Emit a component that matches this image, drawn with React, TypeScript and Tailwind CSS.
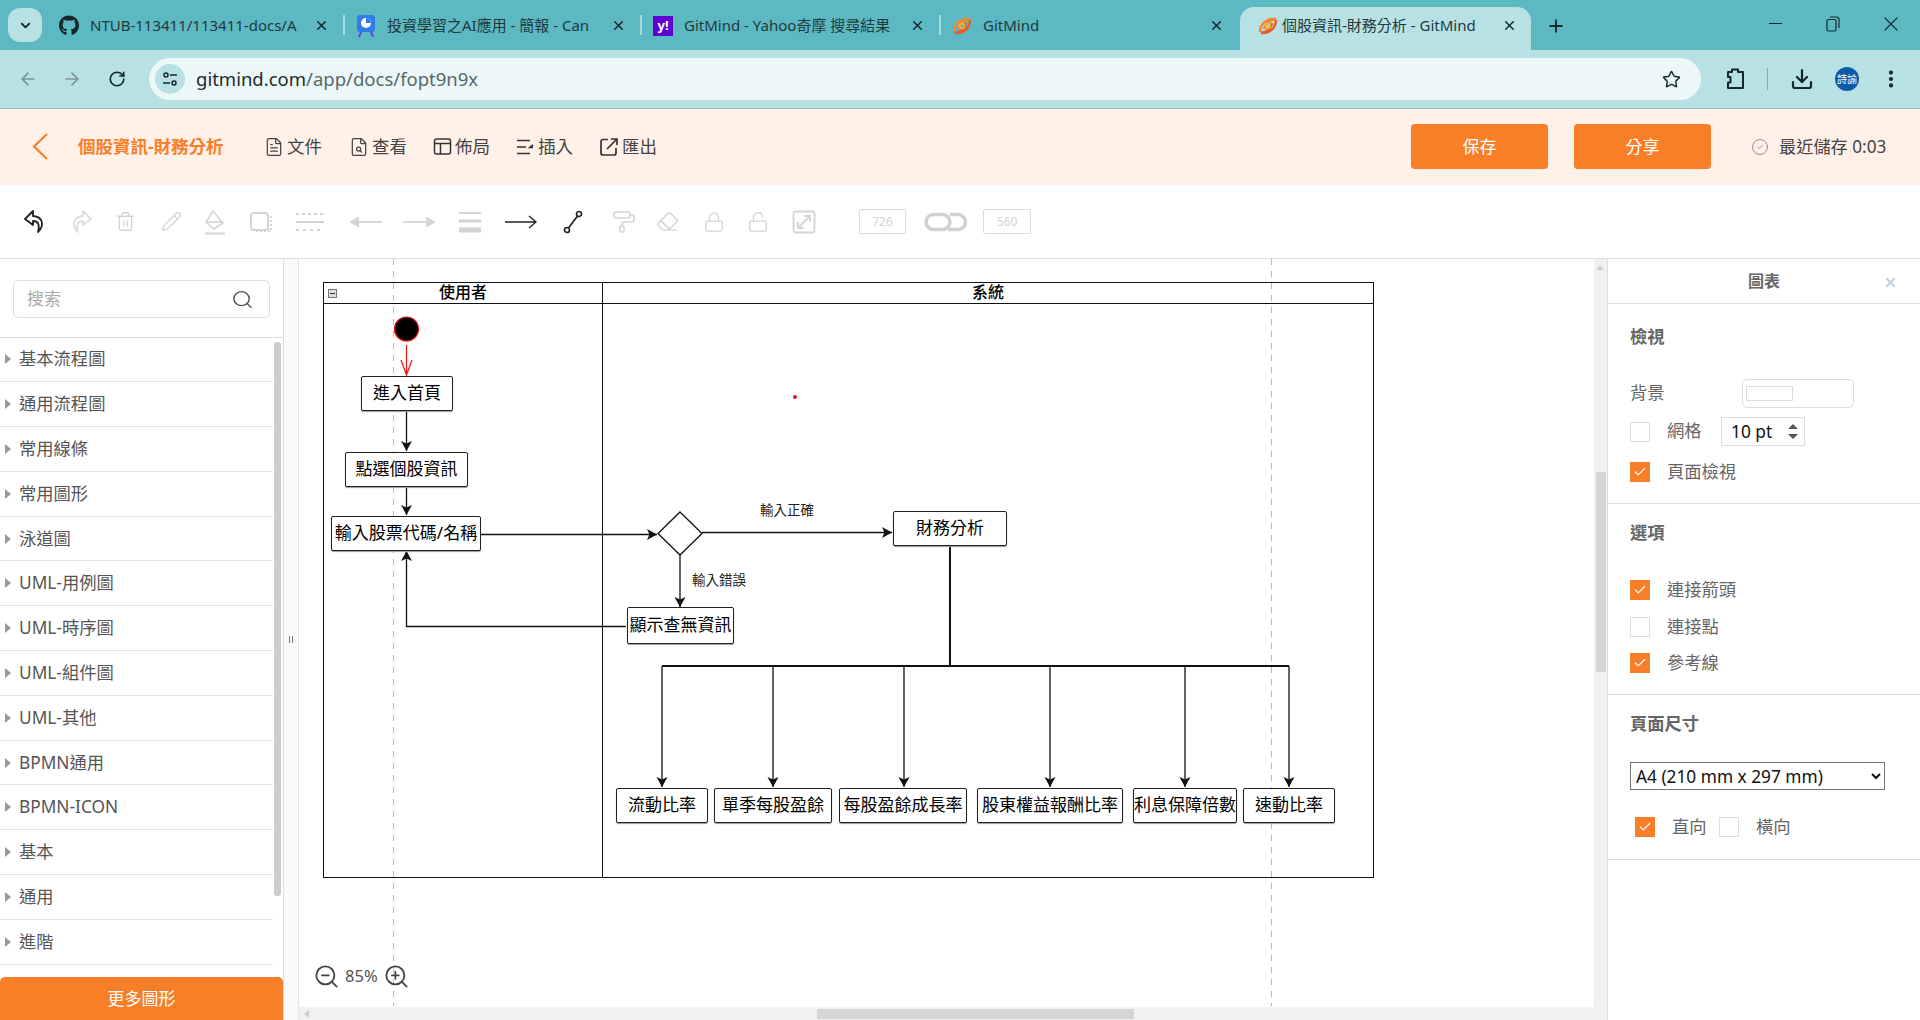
import React from 'react';
import {
  ArrowLeft, ArrowRight, RotateCw, Star, Download, MoreVertical, X, Plus, ChevronDown,
  FileText, FileSearch, Search, Check, CircleCheck, Trash2, Pencil,
  PaintRoller, Eraser, Lock, LockOpen, ZoomIn, ZoomOut,
} from 'lucide-react';
import { FaGithub } from 'react-icons/fa';

const FONT = "font-['Noto_Sans','Noto_Sans_CJK_TC',sans-serif]";

function GitMindLogo() {
  return (
    <svg width="20" height="20" viewBox="0 0 20 20" fill="none">
      <path d="M2 16 C2 8 9 2 18 3 C12 4 7 8 6 13" stroke="#f5872b" strokeWidth="2.4" />
      <path d="M18 4 C18 12 11 18 3 17 C9 16 13 12 14 7" stroke="#ea5a2a" strokeWidth="2.4" />
      <circle cx="10" cy="10" r="2.4" stroke="#f7b32b" strokeWidth="1.6" />
    </svg>
  );
}

function Tab({ icon, title, w, sep = true }: { icon: React.ReactNode; title: string; w: string; sep?: boolean }) {
  return (
    <div className={`${w} h-[43px] pb-[6px] flex items-center shrink-0 relative`}>
      <span className="w-5 h-5 flex items-center justify-center shrink-0 ml-[11px]">{icon}</span>
      <span className="ml-[11px] whitespace-nowrap text-[15px] text-[#1d3a3e]">{title}</span>
      <X size={15} strokeWidth={2.4} className="absolute right-[16px] top-[11px] text-[#14282b]" />
      {sep && <span className="absolute right-0 top-[8px] w-[2px] h-[20px] bg-[#a9d9dd]" />}
    </div>
  );
}

function Menu({ icon, label, w }: { icon: React.ReactNode; label: string; w: string }) {
  return (
    <div className={`${w} flex items-center gap-[3px] text-[17.5px] text-[#444]`}>
      <span className="w-5 flex justify-center">{icon}</span>
      <span>{label}</span>
    </div>
  );
}

function Undo({ flip = false, color }: { flip?: boolean; color: string }) {
  return (
    <svg width="24" height="26" viewBox="0 0 24 26" fill="none" stroke={color} strokeWidth="1.8" strokeLinejoin="round" className={flip ? '-scale-x-100' : ''}>
      <path d="M10 2 L2 10 L10 16 V12 C15 12 17 15 15 23 C21 17 21 8 10 7 Z" />
    </svg>
  );
}

function Checkbox({ on = false }: { on?: boolean }) {
  return on ? (
    <span className="w-5 h-5 bg-[#f87e28] flex items-center justify-center shrink-0">
      <Check size={14} strokeWidth={2.2} className="text-white" />
    </span>
  ) : (
    <span className="w-5 h-5 bg-white border border-[#ddd] shrink-0" />
  );
}

const CATEGORIES = ['基本流程圖', '通用流程圖', '常用線條', '常用圖形', '泳道圖', 'UML-用例圖', 'UML-時序圖', 'UML-組件圖', 'UML-其他', 'BPMN通用', 'BPMN-ICON', '基本', '通用', '進階'];

function Node({ className, label }: { className: string; label: string }) {
  return (
    <div className={`absolute h-[35px] pb-[2px] flex items-center justify-center bg-white border-[1.5px] border-[#222] rounded-[2px] shadow-[0_1px_1px_#999] text-[17px] text-black whitespace-nowrap ${className}`}>
      {label}
    </div>
  );
}

function Diagram() {
  const drops = [662, 773, 904, 1050, 1185, 1289];
  return (
    <svg className="absolute inset-0" width="1296" height="761" viewBox="299 259 1296 761" fill="none">
      <defs>
        <marker id="head" markerWidth="12" markerHeight="12" refX="10" refY="5.5" orient="auto" markerUnits="userSpaceOnUse">
          <path d="M0 0 L10 5.5 L0 11 L2.5 5.5 Z" fill="#111" />
        </marker>
      </defs>
      <g stroke="#111" strokeWidth="1.3">
        <path d="M406.5 411 V451" markerEnd="url(#head)" />
        <path d="M406.5 487 V515" markerEnd="url(#head)" />
        <path d="M481 534.5 H657" markerEnd="url(#head)" />
        <path d="M702 532.5 H892" markerEnd="url(#head)" />
        <path d="M680 555 V607" markerEnd="url(#head)" />
        <path d="M626 626.5 H406.5 V551" markerEnd="url(#head)" />
        <path d="M950 546 V666" strokeWidth="2" />
        <path d="M662 666 H1289" strokeWidth="2" />
        {drops.map((x) => (
          <path key={x} d={`M${x} 666 V787`} markerEnd="url(#head)" />
        ))}
        <path d="M680 512 L702 533.5 L680 555 L658 533.5 Z" fill="#fff" />
      </g>
      <path d="M406.5 345 V375 M401 360 L406.5 375 L412 360" stroke="#f01010" strokeWidth="1.2" />
      <circle cx="406.5" cy="329" r="12" fill="#000" stroke="#f01010" strokeWidth="1.2" />
      <circle cx="795" cy="397" r="2" fill="#f01010" />
    </svg>
  );
}

export default function App() {
  return (
    <div className={`${FONT} w-[1920px] h-[1020px] overflow-hidden bg-white flex flex-col`}>
      {/* browser tabs */}
      <div className="h-[50px] bg-[#5cb8c1] flex items-end relative shrink-0">
        <div className="absolute left-[8px] top-[8px] w-[34px] h-[34px] rounded-[12px] bg-[#b8e1e4] flex items-center justify-center">
          <ChevronDown size={15} strokeWidth={3} className="text-[#14282b]" />
        </div>
        <div className="ml-[48px] flex items-center h-[43px]">
          <Tab w="w-[297px]" title="NTUB-113411/113411-docs/A" icon={<FaGithub size={21} className="text-[#14282b]" />} />
          <Tab w="w-[297px]" title="投資學習之AI應用 - 簡報 - Can" icon={
            <svg width="20" height="24" viewBox="0 0 20 24"><rect x="1" y="1" width="18" height="17" rx="3" fill="#2f7be8" /><circle cx="10" cy="9" r="5" fill="#fff" /><path d="M10 9 V4 A5 5 0 0 1 15 9 Z" fill="#2f7be8" /><path d="M5 18 L3 23 M15 18 L17 23" stroke="#6a3de8" strokeWidth="2" /></svg>
          } />
          <Tab w="w-[299px]" title="GitMind - Yahoo奇摩 搜尋結果" icon={
            <span className="w-5 h-5 bg-[#5f01d1] text-white text-[13px] font-bold flex items-center justify-center leading-none">y!</span>
          } />
          <Tab w="w-[299px]" title="GitMind" sep={false} icon={<GitMindLogo />} />
          <div className="w-[291px] h-[43px] pb-[6px] bg-[#b8e1e4] rounded-t-[14px] flex items-center relative shrink-0">
            <span className="ml-[18px] w-5 h-5 flex items-center justify-center"><GitMindLogo /></span>
            <span className="ml-[4px] w-[200px] whitespace-nowrap text-[15px] text-[#1d3a3e]">個股資訊-財務分析 - GitMind</span>
            <X size={15} strokeWidth={2.4} className="absolute right-[14px] top-[11px] text-[#14282b]" />
          </div>
          <Plus size={20} strokeWidth={2.2} className="ml-[15px] -mt-[6px] text-[#14282b]" />
        </div>
        <div className="ml-auto h-full flex items-center pb-[3px] text-[#14282b]">
          <span className="w-[13px] h-[1.5px] bg-[#14282b] mr-[44px]" />
          <svg width="14" height="16" viewBox="0 0 14 16" fill="none" stroke="#14282b" strokeWidth="1.2" className="mr-[39px]"><rect x="1" y="3.5" width="9" height="11.5" rx="1.5" /><path d="M4 1 H10.5 A2.5 2.5 0 0 1 13 3.5 V12" /></svg>
          <X size={24} strokeWidth={1.1} className="mr-[17px]" />
        </div>
      </div>

      {/* browser toolbar */}
      <div className="h-[59px] bg-[#b8e1e4] border-b border-[#9dbcbe] flex items-center shrink-0">
        <ArrowLeft size={20} strokeWidth={2} className="ml-[18px] text-[#7d9497]" />
        <ArrowRight size={20} strokeWidth={2} className="ml-[24px] text-[#7d9497]" />
        <RotateCw size={18} strokeWidth={2.2} className="ml-[26px] text-[#14282b]" />
        <div className="ml-[23px] w-[1552px] h-[42px] rounded-full bg-[#ecf8f8] flex items-center">
          <span className="ml-[6px] w-[30px] h-[30px] rounded-full bg-[#b8e1e4] flex items-center justify-center">
            <svg width="16" height="16" viewBox="0 0 16 16" fill="none" stroke="#14282b" strokeWidth="1.5"><circle cx="4" cy="4" r="2" /><path d="M8 4 H15 M1 12 H8" /><circle cx="12" cy="12" r="2" /></svg>
          </span>
          <span className="ml-[11px] text-[18.5px] text-[#1d2a2c]">gitmind.com<span className="text-[#55686b]">/app/docs/fopt9n9x</span></span>
          <Star size={19} strokeWidth={1.8} className="ml-auto mr-[20px] text-[#14282b]" />
        </div>
        <svg width="22" height="24" viewBox="0 0 22 24" fill="none" stroke="#14282b" strokeWidth="2" strokeLinejoin="round" className="ml-[23px]"><path d="M4 5 H8 V2.5 H14 V5 H19 V21 H4 V15.5 H6.5 V10 H4 Z" /></svg>
        <span className="ml-[21px] w-[1px] h-[22px] bg-[#5cb8c1]" />
        <Download size={24} strokeWidth={2.2} className="ml-[22px] text-[#14282b]" />
        <span className="ml-[21px] w-[24px] h-[24px] rounded-full bg-[#0b5ca8] text-white text-[10px] leading-none flex items-center justify-center">詩諭</span>
        <MoreVertical size={22} strokeWidth={2.6} className="ml-[21px] text-[#14282b]" />
      </div>

      {/* document header */}
      <div className="h-[76px] pb-[1px] bg-[#fff1e8] flex items-center shrink-0">
        <svg width="16" height="27" viewBox="0 0 16 27" fill="none" stroke="#f87e28" strokeWidth="2.2" className="ml-[32px]"><path d="M15 1 L2 13.5 L15 26" /></svg>
        <span className="ml-[30px] w-[186px] text-[17.5px] font-bold text-[#f87e28] whitespace-nowrap">個股資訊-財務分析</span>
        <Menu w="w-[85px]" label="文件" icon={<FileText size={20} strokeWidth={1.5} />} />
        <Menu w="w-[83px]" label="查看" icon={<FileSearch size={20} strokeWidth={1.5} />} />
        <Menu w="w-[83px]" label="佈局" icon={
          <svg width="19" height="19" viewBox="0 0 19 19" fill="none" stroke="#333" strokeWidth="1.5"><rect x="1.5" y="2" width="16" height="15" rx="2" /><path d="M1.5 6.5 H17.5 M7.5 6.5 V17" /></svg>
        } />
        <Menu w="w-[84px]" label="插入" icon={
          <svg width="20" height="18" viewBox="0 0 20 18" stroke="#333" strokeWidth="1.7" fill="none"><path d="M2 2.5 H15 M2 9 H11 M2 15.5 H15" /><path d="M18 7 L15 9.5 H18" /></svg>
        } />
        <Menu w="w-[70px]" label="匯出" icon={
          <svg width="20" height="20" viewBox="0 0 20 20" fill="none" stroke="#333" strokeWidth="1.7"><path d="M9 2.5 H4 A2 2 0 0 0 2 4.5 V16 A2 2 0 0 0 4 18 H15 A2 2 0 0 0 17 16 V11" /><path d="M8 12 L18 2 M12 2 H18 V8" /></svg>
        } />
        <button className="ml-[742px] w-[137px] h-[45px] rounded-[4px] bg-[#f87e28] text-white text-[17px]">保存</button>
        <button className="ml-[26px] w-[137px] h-[45px] rounded-[4px] bg-[#f87e28] text-white text-[17px]">分享</button>
        <CircleCheck size={18} strokeWidth={1.3} className="ml-[40px] text-[#8a8f99]" />
        <span className="ml-[10px] text-[17.2px] text-[#444] whitespace-nowrap">最近儲存 0:03</span>
      </div>

      {/* edit toolbar */}
      <div className="h-[74px] border-b border-[#ddd] flex items-center shrink-0 text-[#d4d4d4]">
        <span className="ml-[23px] w-[46px]"><Undo color="#222" /></span>
        <span className="w-[44px]"><Undo flip color="#ddd" /></span>
        <span className="w-[46px] ml-[2px]"><Trash2 size={21} strokeWidth={1.5} /></span>
        <span className="w-[42px]"><Pencil size={21} strokeWidth={1.5} /></span>
        <span className="w-[46px]">
          <svg width="24" height="26" viewBox="0 0 24 26" fill="none" stroke="#d4d4d4" strokeWidth="1.6"><path d="M10 2 L3 13 L11 20 L20 14 Z" /><path d="M3 13 H20" /><path d="M2 24.5 H22" strokeWidth="2" /></svg>
        </span>
        <span className="w-[47px]">
          <svg width="24" height="22" viewBox="0 0 24 22" fill="none" stroke="#d4d4d4" strokeWidth="2"><rect x="2" y="2" width="17" height="17" rx="3" /><path d="M22 5 V20 H6" strokeDasharray="2 2" /></svg>
        </span>
        <span className="w-[54px]">
          <svg width="28" height="20" viewBox="0 0 28 20" stroke="#d4d4d4" strokeWidth="2"><path d="M0 2 H28" strokeDasharray="3 3" /><path d="M0 10 H28" /><path d="M0 18 H28" strokeDasharray="3 4" /></svg>
        </span>
        <span className="w-[53px]"><svg width="32" height="14" viewBox="0 0 32 14" stroke="#d4d4d4" strokeWidth="1.8" fill="#d4d4d4"><path d="M32 7 H6" /><path d="M8 3 L1 7 L8 11 Z" /></svg></span>
        <span className="w-[55px]"><svg width="32" height="14" viewBox="0 0 32 14" stroke="#d4d4d4" strokeWidth="1.8" fill="#d4d4d4"><path d="M0 7 H26" /><path d="M24 3 L31 7 L24 11 Z" /></svg></span>
        <span className="w-[47px]"><svg width="24" height="24" viewBox="0 0 24 24" stroke="#d4d4d4"><path d="M1 3 H23" strokeWidth="2" /><path d="M1 11 H23" strokeWidth="3" /><path d="M1 20 H23" strokeWidth="5" /></svg></span>
        <span className="w-[58px]"><svg width="32" height="14" viewBox="0 0 32 14" fill="none" stroke="#222" strokeWidth="1.4"><path d="M0 7 H30 M24 1 L31 7 L24 13" /></svg></span>
        <span className="w-[49px]"><svg width="20" height="24" viewBox="0 0 20 24" fill="none" stroke="#222" strokeWidth="1.7"><circle cx="4" cy="20" r="2.5" /><circle cx="16" cy="4" r="2.5" /><path d="M5.5 18 L14.5 6" /></svg></span>
        <span className="w-[44px]"><PaintRoller size={24} strokeWidth={1.5} /></span>
        <span className="w-[47px]"><Eraser size={23} strokeWidth={1.5} /></span>
        <span className="w-[44px]"><Lock size={22} strokeWidth={1.4} /></span>
        <span className="w-[45px]"><LockOpen size={22} strokeWidth={1.5} /></span>
        <span className="w-[67px]">
          <svg width="24" height="24" viewBox="0 0 24 24" fill="none" stroke="#d4d4d4" strokeWidth="1.8"><rect x="1.5" y="1.5" width="21" height="21" rx="2" /><path d="M6 18 L18 6 M12 6 H18 V12 M6 12 V18 H12" /></svg>
        </span>
        <span className="w-[47px] h-[25px] border border-[#ddd] rounded-[2px] text-[12px] flex items-center justify-center">726</span>
        <svg width="44" height="20" viewBox="0 0 44 20" fill="none" stroke="#d0d0d0" strokeWidth="3.5" className="ml-[18px] mr-[15px]"><rect x="2" y="2.5" width="24" height="15" rx="7.5" /><path d="M26 2.5 H34 A7.5 7.5 0 0 1 34 17.5 H24" /></svg>
        <span className="w-[48px] h-[25px] border border-[#ddd] rounded-[2px] text-[12px] flex items-center justify-center">560</span>
      </div>

      {/* main */}
      <div className="flex-1 flex min-h-0">
        {/* shapes sidebar */}
        <div className="w-[284px] shrink-0 border-r border-[#ddd] flex flex-col relative">
          <div className="h-[78.5px] shrink-0 border-b border-[#ddd] px-[13px] pt-[21px]">
            <div className="h-[38px] w-[257px] border border-[#ddd] rounded-[5px] flex items-center pl-[13px] pr-[16px] text-[17px] text-[#aaa]">
              <span>搜索</span>
              <Search size={21} strokeWidth={1.5} className="ml-auto text-[#555] scale-x-110" />
            </div>
          </div>
          {CATEGORIES.map((c) => (
            <div key={c} className="h-[44.8px] shrink-0 w-[273px] border-b border-[#e4e4e4] flex items-center text-[17.3px] text-[#555]">
              <span className="ml-[5px] w-0 h-0 border-y-[5px] border-y-transparent border-l-[6px] border-l-[#999]" />
              <span className="ml-[8px] whitespace-nowrap">{c}</span>
            </div>
          ))}
          <span className="absolute left-[274px] top-[83px] w-[7px] h-[554px] rounded-[3px] bg-[#cdcdcd]" />
          <button className="mt-auto h-[43px] rounded-t-[5px] bg-[#f87e28] text-white text-[17px]">更多圖形</button>
        </div>

        {/* splitter */}
        <div className="w-[15px] shrink-0 bg-[#fafafa] border-r border-[#e4e4e4] flex items-center justify-center">
          <span className="w-[4px] h-[7px] border-x border-[#777]" />
        </div>

        {/* canvas */}
        <div className="flex-1 relative overflow-hidden bg-white">
          {/* swim lanes */}
          <div className="absolute left-[24px] top-[23px] w-[1051px] h-[596px] border-[1.5px] border-[#111] flex text-black">
            <div className="w-[279px] border-r-[1.5px] border-[#111]">
              <div className="h-[21px] pb-[2px] border-b-[1.5px] border-[#111] flex items-center justify-center text-[16px] font-medium relative">
                <span className="absolute left-[4px] top-[6px] w-[9px] h-[9px] border border-[#777] bg-[#ddd] flex items-center justify-center"><span className="w-[5px] h-[1px] bg-[#333]" /></span>
                使用者
              </div>
            </div>
            <div className="flex-1">
              <div className="h-[21px] pb-[2px] border-b-[1.5px] border-[#111] flex items-center justify-center text-[16px] font-medium">系統</div>
            </div>
          </div>

          <svg className="absolute inset-0" width="1296" height="761" fill="none" stroke="#bbb">
            <path d="M94.5 0 V747 M972.5 0 V747" strokeDasharray="6 6" />
          </svg>

          <Diagram />

          <Node className="left-[62px] top-[117px] w-[92px]" label="進入首頁" />
          <Node className="left-[46px] top-[193px] w-[123px]" label="點選個股資訊" />
          <Node className="left-[32px] top-[257px] w-[150px]" label="輸入股票代碼/名稱" />
          <Node className="left-[594px] top-[252px] w-[114px]" label="財務分析" />
          <Node className="left-[328px] top-[348px] w-[107px] !h-[37px]" label="顯示查無資訊" />
          <Node className="left-[317px] top-[529px] w-[92px]" label="流動比率" />
          <Node className="left-[415px] top-[529px] w-[118px]" label="單季每股盈餘" />
          <Node className="left-[540px] top-[529px] w-[128px]" label="每股盈餘成長率" />
          <Node className="left-[678px] top-[529px] w-[146px]" label="股東權益報酬比率" />
          <Node className="left-[834px] top-[529px] w-[104px]" label="利息保障倍數" />
          <Node className="left-[944px] top-[529px] w-[92px]" label="速動比率" />

          <span className="absolute left-[461px] top-[241px] text-[13.5px] leading-[20px] text-[#222]">輸入正確</span>
          <span className="absolute left-[393px] top-[311px] text-[13.5px] leading-[20px] text-[#222]">輸入錯誤</span>

          {/* zoom control */}
          <div className="absolute left-[14px] top-[704px] flex items-center gap-[5px] text-[16.5px] text-[#555]">
            <ZoomOut size={27} strokeWidth={1.6} className="text-[#444]" />
            <span>85%</span>
            <ZoomIn size={27} strokeWidth={1.6} className="text-[#444]" />
          </div>

          {/* horizontal scrollbar */}
          <div className="absolute left-0 right-0 bottom-0 h-[13px] bg-[#f1f1f1]">
            <span className="absolute left-[5px] top-[3px] w-0 h-0 border-y-[4px] border-y-transparent border-r-[5px] border-r-[#ccc]" />
            <span className="absolute left-[518px] top-[2px] w-[317px] h-[10px] bg-[#d6d6d6]" />
          </div>
        </div>

        {/* vertical scrollbar */}
        <div className="w-[13px] shrink-0 bg-[#f1f1f1] relative">
          <span className="absolute left-[2px] top-[6px] w-0 h-0 border-x-[4px] border-x-transparent border-b-[5px] border-b-[#ccc]" />
          <span className="absolute left-[2px] top-[213px] w-[10px] h-[200px] bg-[#d6d6d6]" />
        </div>

        {/* right panel */}
        <div className="w-[313px] shrink-0 border-l border-[#ddd] text-[#666] text-[17.3px]">
          <div className="h-[45px] border-b border-[#ddd] flex items-center justify-center relative text-[16px] font-bold">
            圖表
            <X size={15} strokeWidth={3} className="absolute right-[22px] top-[16px] text-[#c3ced9]" />
          </div>
          <div className="h-[200px] border-b border-[#ddd] pl-[22px] pt-[21px]">
            <div className="font-bold leading-[24px]">檢視</div>
            <div className="mt-[30px] h-[28px] flex items-center">
              <span className="w-[112px]">背景</span>
              <span className="w-[112px] h-[29px] border border-[#ddd] rounded-[5px] flex items-center pl-[3px]">
                <span className="w-[47px] h-[15px] border border-[#ddd]" />
              </span>
            </div>
            <div className="mt-[10px] h-[29px] flex items-center">
              <Checkbox />
              <span className="ml-[17px] w-[54px] -mt-[1px]">網格</span>
              <span className="w-[84px] h-[29px] border border-[#ddd] flex items-center pl-[9px] text-[#111] relative">
                10 pt
                <svg width="10" height="15" viewBox="0 0 10 15" className="absolute right-[6px] top-[6px]" fill="#555"><path d="M5 0 L10 5 H0 Z M5 15 L0 10 H10 Z" /></svg>
              </span>
            </div>
            <div className="mt-[16px] h-[20px] flex items-center">
              <Checkbox on />
              <span className="ml-[17px]">頁面檢視</span>
            </div>
          </div>
          <div className="h-[191px] border-b border-[#ddd] pl-[22px] pt-[17px]">
            <div className="font-bold leading-[24px]">選項</div>
            <div className="mt-[35px] h-[20px] flex items-center">
              <Checkbox on />
              <span className="ml-[17px]">連接箭頭</span>
            </div>
            <div className="mt-[17px] h-[20px] flex items-center">
              <Checkbox />
              <span className="ml-[17px]">連接點</span>
            </div>
            <div className="mt-[16px] h-[20px] flex items-center">
              <Checkbox on />
              <span className="ml-[17px]">參考線</span>
            </div>
          </div>
          <div className="h-[165px] border-b border-[#ddd] pl-[22px] pt-[17px]">
            <div className="font-bold leading-[24px]">頁面尺寸</div>
            <select defaultValue="a4" className="mt-[26px] block w-[255px] h-[28px] border border-[#767676] bg-white pl-[1px] text-[17.3px] text-[#111]">
              <option value="a4">A4 (210 mm x 297 mm)</option>
            </select>
            <div className="mt-[27px] ml-[5px] h-[20px] flex items-center">
              <Checkbox on />
              <span className="ml-[17px] w-[47px]">直向</span>
              <Checkbox />
              <span className="ml-[17px]">橫向</span>
            </div>
          </div>
        </div>
      </div>
    </div>
  );
}
